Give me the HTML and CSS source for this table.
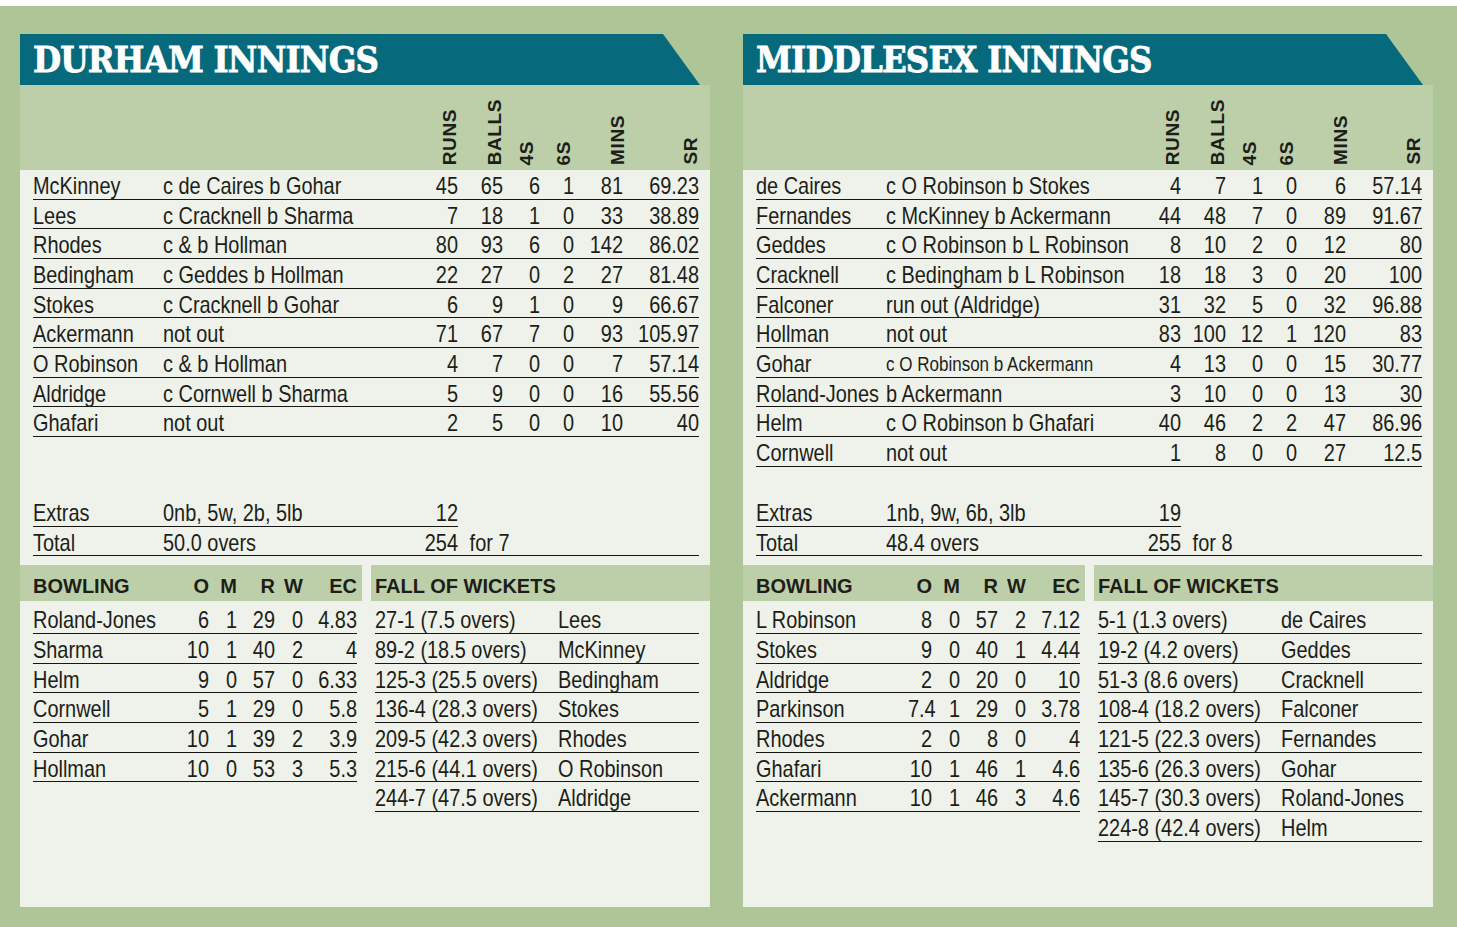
FILE: index.html
```html
<!DOCTYPE html>
<html lang="en">
<head>
<meta charset="utf-8">
<title>Scorecard</title>
<link rel="stylesheet" href="styles.css">
</head>
<body>
<div class="page">

  <section class="panel">
    <h1 class="title">DURHAM INNINGS</h1>
    <div class="hdr">
      <span></span><span></span>
      <span class="vl">RUNS</span><span class="vl">BALLS</span><span class="vl v4">4S</span><span class="vl v6">6S</span><span class="vl vm">MINS</span><span class="vl">SR</span>
    </div>
    <div class="body">
      <div class="bat">
        <div class="row"><span>McKinney</span><span>c de Caires b Gohar</span><span class="n">45</span><span class="n">65</span><span class="n">6</span><span class="n">1</span><span class="n">81</span><span class="n">69.23</span></div>
        <div class="row"><span>Lees</span><span>c Cracknell b Sharma</span><span class="n">7</span><span class="n">18</span><span class="n">1</span><span class="n">0</span><span class="n">33</span><span class="n">38.89</span></div>
        <div class="row"><span>Rhodes</span><span>c &amp; b Hollman</span><span class="n">80</span><span class="n">93</span><span class="n">6</span><span class="n">0</span><span class="n">142</span><span class="n">86.02</span></div>
        <div class="row"><span>Bedingham</span><span>c Geddes b Hollman</span><span class="n">22</span><span class="n">27</span><span class="n">0</span><span class="n">2</span><span class="n">27</span><span class="n">81.48</span></div>
        <div class="row"><span>Stokes</span><span>c Cracknell b Gohar</span><span class="n">6</span><span class="n">9</span><span class="n">1</span><span class="n">0</span><span class="n">9</span><span class="n">66.67</span></div>
        <div class="row"><span>Ackermann</span><span>not out</span><span class="n">71</span><span class="n">67</span><span class="n">7</span><span class="n">0</span><span class="n">93</span><span class="n">105.97</span></div>
        <div class="row"><span>O Robinson</span><span>c &amp; b Hollman</span><span class="n">4</span><span class="n">7</span><span class="n">0</span><span class="n">0</span><span class="n">7</span><span class="n">57.14</span></div>
        <div class="row"><span>Aldridge</span><span>c Cornwell b Sharma</span><span class="n">5</span><span class="n">9</span><span class="n">0</span><span class="n">0</span><span class="n">16</span><span class="n">55.56</span></div>
        <div class="row"><span>Ghafari</span><span>not out</span><span class="n">2</span><span class="n">5</span><span class="n">0</span><span class="n">0</span><span class="n">10</span><span class="n">40</span></div>
      </div>
      <div class="extras"><span>Extras</span><span>0nb, 5w, 2b, 5lb</span><span class="n">12</span></div>
      <div class="row total"><span>Total</span><span>50.0 overs</span><span class="n">254</span><span class="for">for 7</span></div>

      <div class="lower">
        <div class="bowl">
          <div class="lhead bgrid"><span>BOWLING</span><span class="h">O</span><span class="h">M</span><span class="h">R</span><span class="h">W</span><span class="h">EC</span></div>
          <div class="list">
            <div class="brow bgrid"><span>Roland-Jones</span><span class="n">6</span><span class="n">1</span><span class="n">29</span><span class="n">0</span><span class="n">4.83</span></div>
            <div class="brow bgrid"><span>Sharma</span><span class="n">10</span><span class="n">1</span><span class="n">40</span><span class="n">2</span><span class="n">4</span></div>
            <div class="brow bgrid"><span>Helm</span><span class="n">9</span><span class="n">0</span><span class="n">57</span><span class="n">0</span><span class="n">6.33</span></div>
            <div class="brow bgrid"><span>Cornwell</span><span class="n">5</span><span class="n">1</span><span class="n">29</span><span class="n">0</span><span class="n">5.8</span></div>
            <div class="brow bgrid"><span>Gohar</span><span class="n">10</span><span class="n">1</span><span class="n">39</span><span class="n">2</span><span class="n">3.9</span></div>
            <div class="brow bgrid"><span>Hollman</span><span class="n">10</span><span class="n">0</span><span class="n">53</span><span class="n">3</span><span class="n">5.3</span></div>
          </div>
        </div>
        <div class="fow">
          <div class="lhead"><span>FALL OF WICKETS</span></div>
          <div class="list">
            <div class="brow fgrid"><span>27-1 (7.5 overs)</span><span>Lees</span></div>
            <div class="brow fgrid"><span>89-2 (18.5 overs)</span><span>McKinney</span></div>
            <div class="brow fgrid"><span>125-3 (25.5 overs)</span><span>Bedingham</span></div>
            <div class="brow fgrid"><span>136-4 (28.3 overs)</span><span>Stokes</span></div>
            <div class="brow fgrid"><span>209-5 (42.3 overs)</span><span>Rhodes</span></div>
            <div class="brow fgrid"><span>215-6 (44.1 overs)</span><span>O Robinson</span></div>
            <div class="brow fgrid"><span>244-7 (47.5 overs)</span><span>Aldridge</span></div>
          </div>
        </div>
      </div>
    </div>
  </section>

  <section class="panel">
    <h1 class="title">MIDDLESEX INNINGS</h1>
    <div class="hdr">
      <span></span><span></span>
      <span class="vl">RUNS</span><span class="vl">BALLS</span><span class="vl v4">4S</span><span class="vl v6">6S</span><span class="vl vm">MINS</span><span class="vl">SR</span>
    </div>
    <div class="body">
      <div class="bat">
        <div class="row"><span>de Caires</span><span>c O Robinson b Stokes</span><span class="n">4</span><span class="n">7</span><span class="n">1</span><span class="n">0</span><span class="n">6</span><span class="n">57.14</span></div>
        <div class="row"><span>Fernandes</span><span>c McKinney b Ackermann</span><span class="n">44</span><span class="n">48</span><span class="n">7</span><span class="n">0</span><span class="n">89</span><span class="n">91.67</span></div>
        <div class="row"><span>Geddes</span><span>c O Robinson b L Robinson</span><span class="n">8</span><span class="n">10</span><span class="n">2</span><span class="n">0</span><span class="n">12</span><span class="n">80</span></div>
        <div class="row"><span>Cracknell</span><span>c Bedingham b L Robinson</span><span class="n">18</span><span class="n">18</span><span class="n">3</span><span class="n">0</span><span class="n">20</span><span class="n">100</span></div>
        <div class="row"><span>Falconer</span><span>run out (Aldridge)</span><span class="n">31</span><span class="n">32</span><span class="n">5</span><span class="n">0</span><span class="n">32</span><span class="n">96.88</span></div>
        <div class="row"><span>Hollman</span><span>not out</span><span class="n">83</span><span class="n">100</span><span class="n">12</span><span class="n">1</span><span class="n">120</span><span class="n">83</span></div>
        <div class="row"><span>Gohar</span><span class="small">c O Robinson b Ackermann</span><span class="n">4</span><span class="n">13</span><span class="n">0</span><span class="n">0</span><span class="n">15</span><span class="n">30.77</span></div>
        <div class="row"><span>Roland-Jones</span><span>b Ackermann</span><span class="n">3</span><span class="n">10</span><span class="n">0</span><span class="n">0</span><span class="n">13</span><span class="n">30</span></div>
        <div class="row"><span>Helm</span><span>c O Robinson b Ghafari</span><span class="n">40</span><span class="n">46</span><span class="n">2</span><span class="n">2</span><span class="n">47</span><span class="n">86.96</span></div>
        <div class="row"><span>Cornwell</span><span>not out</span><span class="n">1</span><span class="n">8</span><span class="n">0</span><span class="n">0</span><span class="n">27</span><span class="n">12.5</span></div>
      </div>
      <div class="extras"><span>Extras</span><span>1nb, 9w, 6b, 3lb</span><span class="n">19</span></div>
      <div class="row total"><span>Total</span><span>48.4 overs</span><span class="n">255</span><span class="for">for 8</span></div>

      <div class="lower">
        <div class="bowl">
          <div class="lhead bgrid"><span>BOWLING</span><span class="h">O</span><span class="h">M</span><span class="h">R</span><span class="h">W</span><span class="h">EC</span></div>
          <div class="list">
            <div class="brow bgrid"><span>L Robinson</span><span class="n">8</span><span class="n">0</span><span class="n">57</span><span class="n">2</span><span class="n">7.12</span></div>
            <div class="brow bgrid"><span>Stokes</span><span class="n">9</span><span class="n">0</span><span class="n">40</span><span class="n">1</span><span class="n">4.44</span></div>
            <div class="brow bgrid"><span>Aldridge</span><span class="n">2</span><span class="n">0</span><span class="n">20</span><span class="n">0</span><span class="n">10</span></div>
            <div class="brow bgrid"><span>Parkinson</span><span class="n">7.4</span><span class="n">1</span><span class="n">29</span><span class="n">0</span><span class="n">3.78</span></div>
            <div class="brow bgrid"><span>Rhodes</span><span class="n">2</span><span class="n">0</span><span class="n">8</span><span class="n">0</span><span class="n">4</span></div>
            <div class="brow bgrid"><span>Ghafari</span><span class="n">10</span><span class="n">1</span><span class="n">46</span><span class="n">1</span><span class="n">4.6</span></div>
            <div class="brow bgrid"><span>Ackermann</span><span class="n">10</span><span class="n">1</span><span class="n">46</span><span class="n">3</span><span class="n">4.6</span></div>
          </div>
        </div>
        <div class="fow">
          <div class="lhead"><span>FALL OF WICKETS</span></div>
          <div class="list">
            <div class="brow fgrid"><span>5-1 (1.3 overs)</span><span>de Caires</span></div>
            <div class="brow fgrid"><span>19-2 (4.2 overs)</span><span>Geddes</span></div>
            <div class="brow fgrid"><span>51-3 (8.6 overs)</span><span>Cracknell</span></div>
            <div class="brow fgrid"><span>108-4 (18.2 overs)</span><span>Falconer</span></div>
            <div class="brow fgrid"><span>121-5 (22.3 overs)</span><span>Fernandes</span></div>
            <div class="brow fgrid"><span>135-6 (26.3 overs)</span><span>Gohar</span></div>
            <div class="brow fgrid"><span>145-7 (30.3 overs)</span><span>Roland-Jones</span></div>
            <div class="brow fgrid"><span>224-8 (42.4 overs)</span><span>Helm</span></div>
          </div>
        </div>
      </div>
    </div>
  </section>

</div>
</body>
</html>
```

FILE: styles.css
```css
* { box-sizing: border-box; }

body {
  margin: 0;
  background: #ffffff;
  font-family: "Liberation Sans", Arial, sans-serif;
  color: #1d1e19;
}

.page {
  margin-top: 6px;
  height: 921px;
  background: #aec598;
  display: flex;
  gap: 33px;
  padding: 28px 23px 20px 20px;
}

.panel {
  width: 690px;
  min-width: 0;
  display: flex;
  flex-direction: column;
}

/* ---------- title band ---------- */
.title {
  margin: 0;
  height: 51px;
  background: #066a7c;
  clip-path: polygon(0 0, calc(100% - 47px) 0, calc(100% - 10px) 100%, 0 100%);
  color: #ffffff;
  font-family: "DejaVu Serif Condensed", "DejaVu Serif", serif;
  font-weight: bold;
  font-size: 36px;
  line-height: 51px;
  padding-left: 13px;
  letter-spacing: -0.8px;
  -webkit-text-stroke: 0.8px #ffffff;
  white-space: nowrap;
}

/* ---------- batting ---------- */
.hdr,
.row {
  display: grid;
  grid-template-columns: 130px 225px 70px 45px 37px 34px 49px 76px;
}

.hdr {
  height: 85px;
  background: #bccfa9;
  padding: 0 11px 5px 13px;
  align-items: end;
}

.vl {
  writing-mode: vertical-rl;
  transform: rotate(180deg);
  justify-self: end;
  font-weight: bold;
  font-size: 19px;
  letter-spacing: 0.6px;
  line-height: 17px;
}

.vl.v4 { margin-right: 5px; }
.vl.v6 { margin-right: 2px; }
.vl.vm { margin-right: -3px; }

.body {
  flex: 1;
  background: #eef2ea;
}

.bat {
  height: 327px;
  margin: 0 11px 0 13px;
}

.row,
.extras,
.brow {
  height: 29.67px;
  font-size: 24px;
  line-height: 31px;
  white-space: nowrap;
}

.row {
  border-bottom: 1px solid #161613;
}

/* condensed letterforms (narrow Arial) */
.row > span,
.extras > span,
.brow > span {
  transform: scaleX(0.83);
  transform-origin: left center;
}

.row > .n,
.extras > .n,
.brow > .n {
  text-align: right;
  transform-origin: right center;
}

.extras {
  display: grid;
  grid-template-columns: 130px 225px 70px;
  width: 425px;
  margin-left: 13px;
  border-bottom: 1px solid #161613;
}

.total {
  margin: 0 11px 0 13px;
}

.for {
  grid-column: 4 / span 3;
  padding-left: 14px;
}

.small {
  font-size: 20.5px;
}

/* ---------- bowling / fall of wickets ---------- */
.lower {
  display: flex;
  gap: 9px;
  margin-top: 9px;
}

.bowl {
  width: 342px;
  flex: none;
}

.fow {
  flex: 1;
  min-width: 0;
}

.lhead {
  height: 36px;
  background: #bccfa9;
  font-weight: bold;
  font-size: 20px;
  padding-top: 7px;
  line-height: 29px;
  white-space: nowrap;
}

.lhead .h {
  text-align: right;
}

.bgrid {
  display: grid;
  grid-template-columns: 147px 29px 28px 38px 28px 54px;
}

.bowl .lhead {
  padding-left: 13px;
  padding-right: 5px;
}

.fow .lhead {
  padding-left: 4px;
}

.list {
  margin-top: 3px;
}

.bowl .list {
  margin-left: 13px;
  margin-right: 5px;
}

.fow .list {
  margin-left: 4px;
  margin-right: 11px;
}

.brow {
  border-bottom: 1px solid #161613;
}

.fgrid {
  display: grid;
  grid-template-columns: 183px minmax(0, 1fr);
}
```
